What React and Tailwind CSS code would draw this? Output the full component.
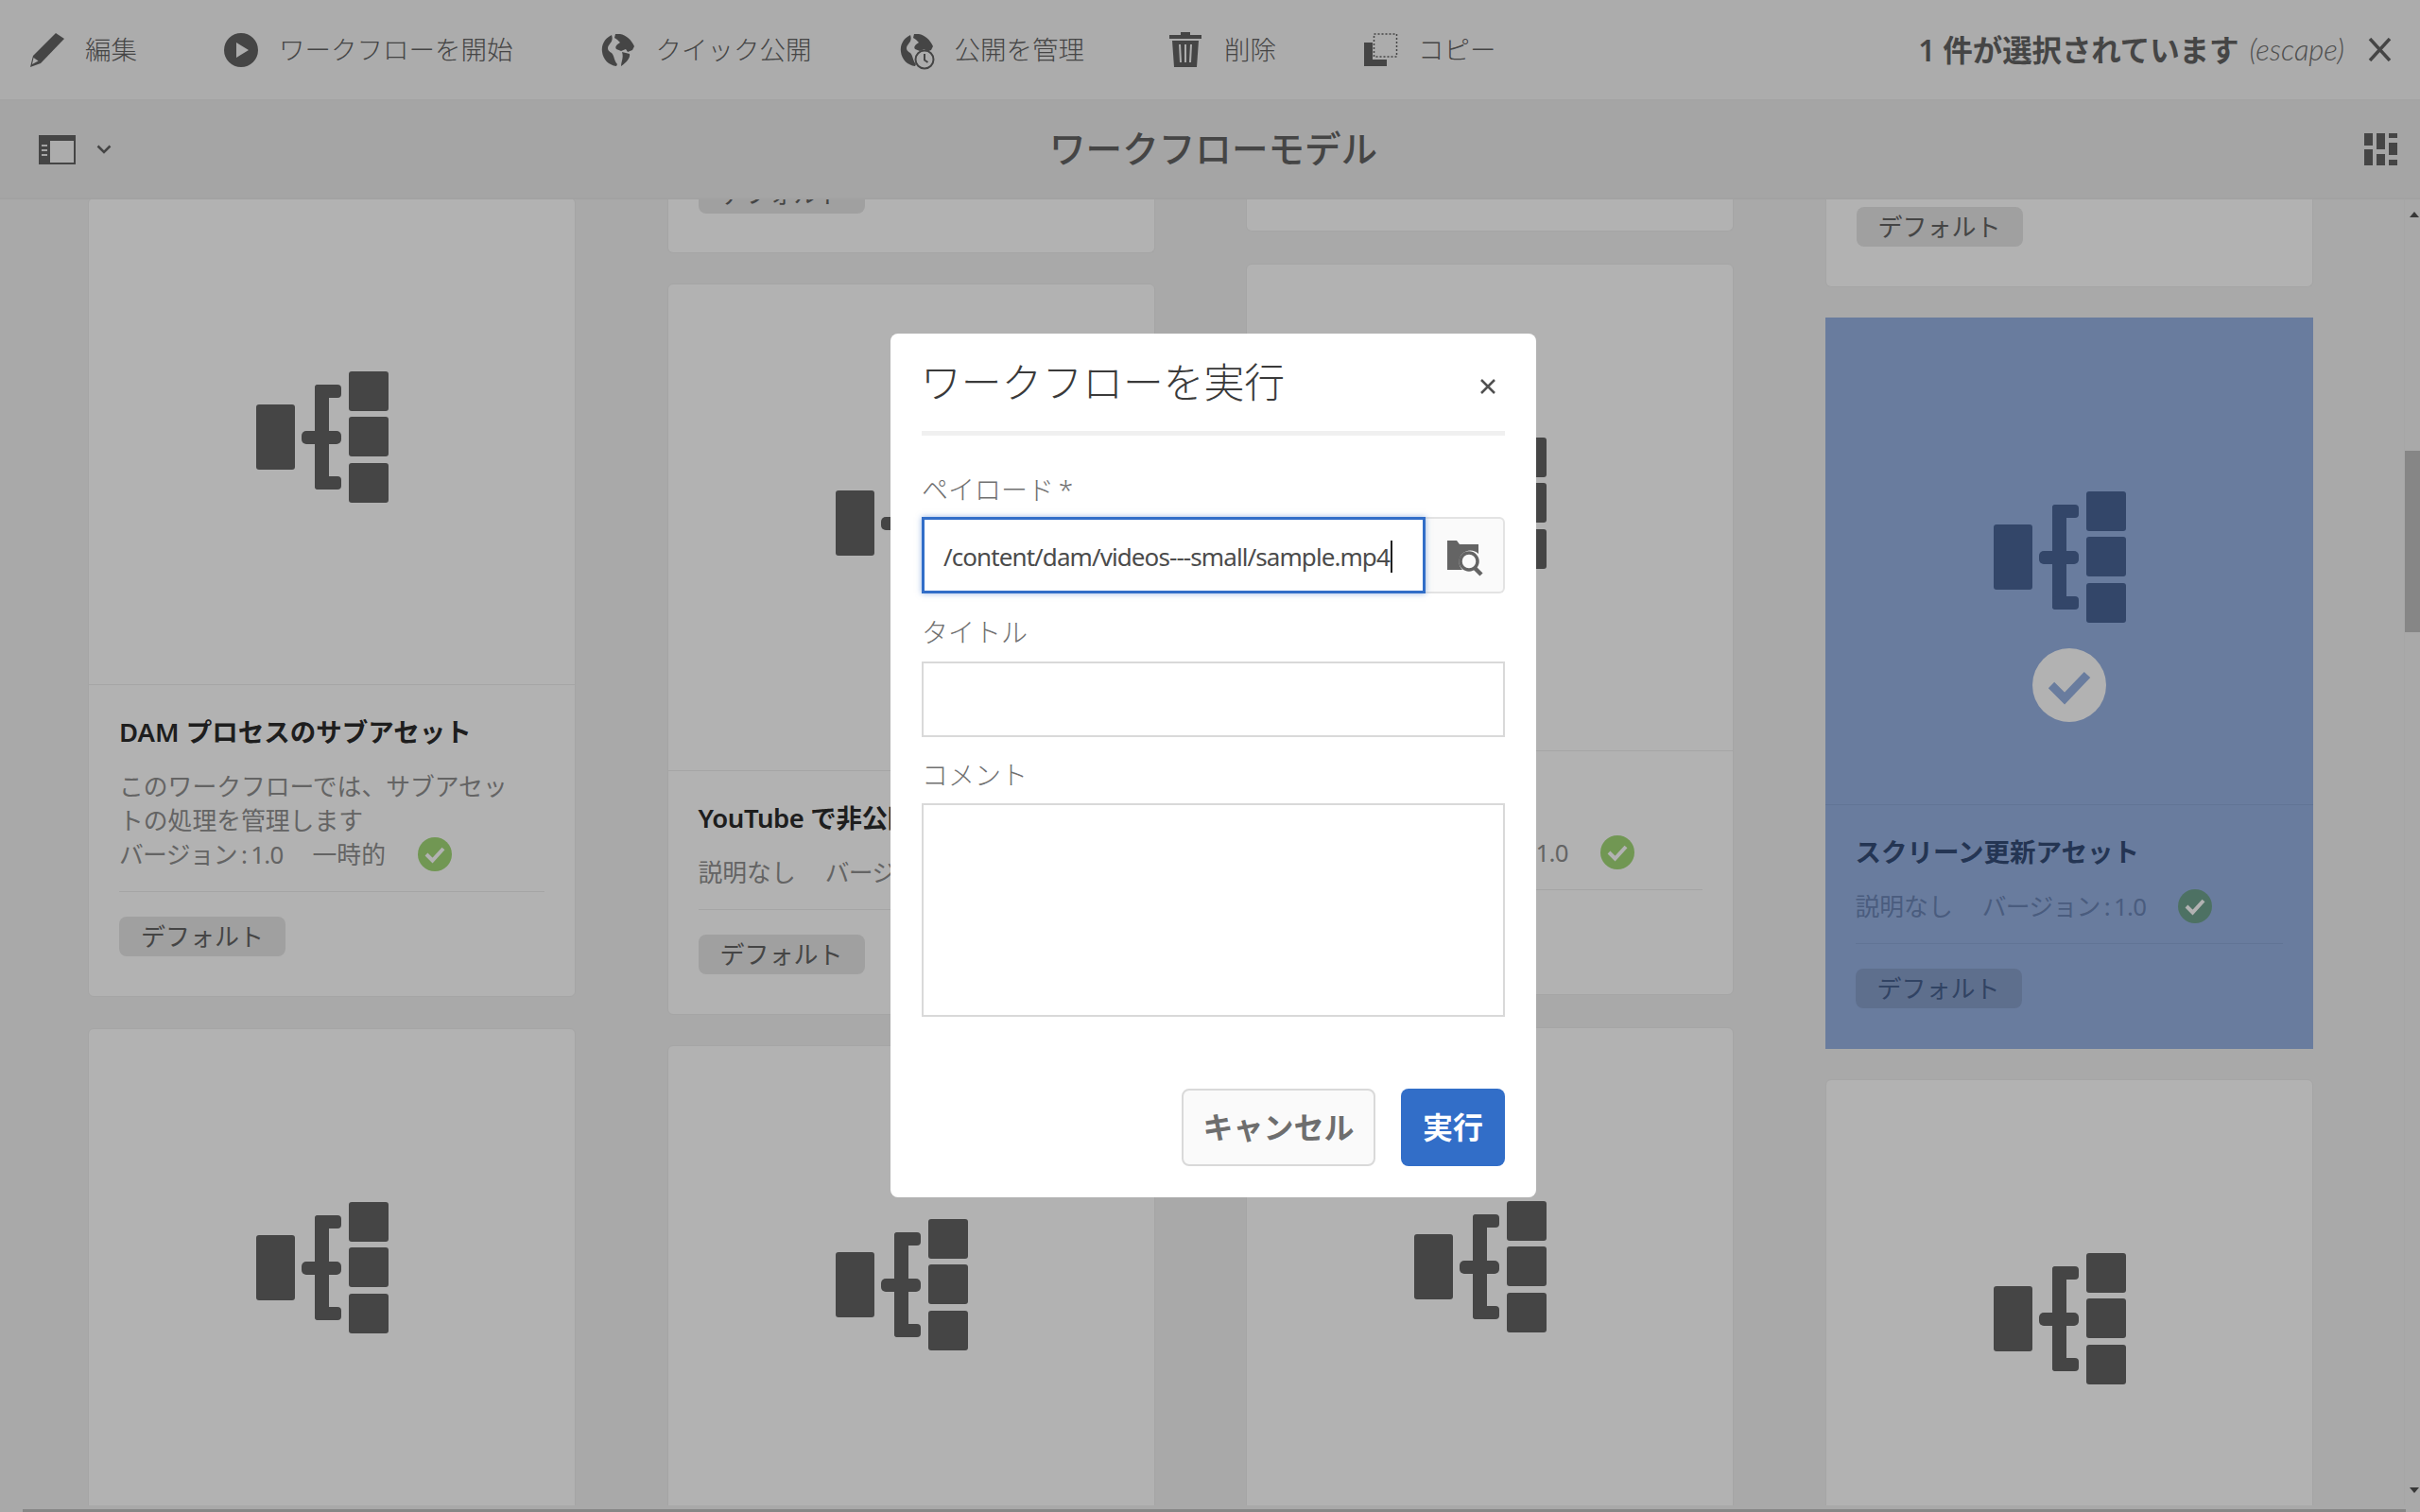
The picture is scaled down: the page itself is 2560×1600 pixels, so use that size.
const FONT = "font-['Noto_Sans','Noto_Sans_CJK_JP',sans-serif]";

const VERSION = <span className="tracking-[-0.7px] [word-spacing:-2px]">バージョン : 1.0</span>;

function WorkflowIcon({ selected }) {
    return (
        <svg width="141" height="140" viewBox="0 0 141 140" className={`mr-[21px] shrink-0 ${selected ? 'fill-[#496597]' : 'fill-[#646464]'}`}>
            <rect x="1" y="35" width="41" height="69" rx="3" />
            <rect x="99" y="0" width="42" height="42" rx="3" />
            <rect x="99" y="48" width="42" height="42" rx="3" />
            <rect x="99" y="97" width="42" height="42" rx="3" />
            <rect x="63" y="14" width="15" height="111" rx="3" />
            <rect x="63" y="14" width="28" height="14" rx="4" />
            <rect x="49" y="63" width="42" height="14" rx="5" />
            <rect x="63" y="111" width="28" height="14" rx="4" />
        </svg>
    );
}

function CheckBadge({ selected }) {
    return (
        <svg width="36" height="36" viewBox="0 0 36 36" className="shrink-0">
            <circle cx="18" cy="18" r="18" className={selected ? 'fill-[#6fa38f]' : 'fill-[#a2d878]'} />
            <path d="M9 18l6.5 6.5L27 12" fill="none" stroke="white" strokeWidth="4" />
        </svg>
    );
}

function Tag({ selected }) {
    return (
        <span className={`flex h-[42px] w-[176px] items-center justify-center rounded-[8px] bg-black/10 text-[26px] ${selected ? 'text-[#47618f]' : 'text-[#646464]'}`}>
            デフォルト
        </span>
    );
}

function WorkflowCard({ title, desc, meta, selected, imageH = 515, children, bodyH }) {
    const titleColor = selected ? 'text-[#344c78]' : 'text-[#2c2c2c]';
    const textColor = selected ? 'text-[#6a85b5]' : 'text-[#909090]';
    const line = selected ? 'border-[#8ba6d6]' : 'border-[#ececec]';
    return (
        <div className={`w-[516px] shrink-0 overflow-hidden ${selected ? 'bg-[#97b2e3]' : 'rounded-[6px] border border-[#ececec] bg-white'}`}>
            <div className={`flex flex-col items-center justify-center border-b pb-[8px] ${line}`} style={{ height: imageH }}>
                <WorkflowIcon selected={selected} />
                {children}
            </div>
            {title && (
                <div className="px-[32px]" style={{ height: bodyH }}>
                    <h3 className={`pt-[32px] text-[27.5px] leading-[36px] font-semibold whitespace-nowrap ${titleColor}`}>{title}</h3>
                    <div className={`mt-[21px] border-b pb-[21px] text-[25.8px] leading-[36px] ${textColor} ${line}`}>
                        {desc && <p>{desc}</p>}
                        <div className="flex items-center whitespace-nowrap">
                            {meta.map((m, i) => (
                                <span key={i} className={i > 0 ? 'ml-[31px]' : ''}>{m}</span>
                            ))}
                            <span className="ml-[34px]"><CheckBadge selected={selected} /></span>
                        </div>
                    </div>
                    <div className="mt-[26px]"><Tag selected={selected} /></div>
                </div>
            )}
        </div>
    );
}

function StubCard({ height, tagOffset }) {
    return (
        <div className="w-[516px] shrink-0 overflow-hidden rounded-b-[6px] border border-t-0 border-[#ececec] bg-white px-[32px]" style={{ height }}>
            {tagOffset !== undefined && <div style={{ marginTop: tagOffset }}><Tag /></div>}
        </div>
    );
}

function ToolItem({ icon, label, gap }) {
    return (
        <div className="flex items-center" style={{ gap }}>
            {icon}
            <span className="whitespace-nowrap">{label}</span>
        </div>
    );
}

function Globe() {
    return (
        <svg width="36" height="36" viewBox="0 0 36 36" className="fill-[#646464]">
            <path d="M11 2C3 6 0 13 1 20c1 8 7 14 15 15l1-2c-4-5-3-9-6-12-4-2-5-5-3-8 2-3 5-5 3-11z" />
            <path d="M15 1h5c6 1 12 6 15 13l-2 4-5 2-2-3-5 2-5-2c-2-3 1-5 4-7l-3-3-3-2z" />
            <path d="M22 20l8 2c1 4-3 9-9 13 0-5 3-9 1-15z" />
        </svg>
    );
}

function FieldLabel({ children, className }) {
    return <label className={`block text-[28px] leading-[36px] font-light text-[#707070] ${className}`}>{children}</label>;
}

export default function App() {
    return (
        <div className={`relative flex h-[1600px] w-[2560px] flex-col overflow-hidden bg-[#f2f2f2] ${FONT}`}>
            {/* action bar */}
            <div className="flex h-[107px] shrink-0 items-center border-b-2 border-[#ebebeb] bg-[#f7f7f7] pr-[30px] pl-[32px] text-[27.5px] font-light text-[#646464]">
                <ToolItem gap="22px" label="編集" icon={
                    <svg width="36" height="36" viewBox="0 0 36 36" className="fill-[#646464]">
                        <path d="M27 0l9 6-25 26-11 4 3-12z" />
                        <path d="M2 33l1.5-7 5 3.5z" className="fill-[#f7f7f7]" />
                    </svg>
                } />
                <div className="ml-[92px]">
                    <ToolItem gap="22px" label="ワークフローを開始" icon={
                        <svg width="36" height="36" viewBox="0 0 36 36">
                            <path fillRule="evenodd" d="M18 0a18 18 0 1 0 0 36 18 18 0 0 0 0-36zM13 10l13 8-13 8z" className="fill-[#646464]" />
                        </svg>
                    } />
                </div>
                <div className="ml-[93px]">
                    <ToolItem gap="22px" label="クイック公開" icon={<Globe />} />
                </div>
                <div className="ml-[93px]">
                    <ToolItem gap="22px" label="公開を管理" icon={
                        <span className="relative block h-[36px] w-[36px]">
                            <Globe />
                            <svg width="22" height="22" viewBox="0 0 22 22" className="absolute -right-[1px] -bottom-[3px]">
                                <circle cx="11" cy="11" r="9.5" fill="#f7f7f7" stroke="#646464" strokeWidth="2" />
                                <path d="M11 5v6.5l3.5 2.5" fill="none" stroke="#646464" strokeWidth="2" />
                            </svg>
                        </span>
                    } />
                </div>
                <div className="ml-[90px]">
                    <ToolItem gap="24px" label="削除" icon={
                        <svg width="34" height="37" viewBox="0 0 34 37" className="fill-[#646464]">
                            <path d="M12 0h10v3h12v4H0V3h12z" />
                            <path fillRule="evenodd" d="M3 9h28l-2 28H5zM10 13l1 19h2l-1-19zM16 13v19h2V13zM22 13l-1 19h2l1-19z" />
                        </svg>
                    } />
                </div>
                <div className="ml-[93px]">
                    <ToolItem gap="21px" label="コピー" icon={
                        <svg width="36" height="36" viewBox="0 0 36 36">
                            <path d="M0 10h9v18h15v7H0z" className="fill-[#646464]" />
                            <rect x="10.5" y="1" width="24" height="24" fill="none" stroke="#646464" strokeWidth="1.5" strokeDasharray="2 2" />
                        </svg>
                    } />
                </div>
                <div className="ml-auto flex items-center text-[#646464]">
                    <span className="text-[31.5px] font-semibold tracking-[-0.1px] whitespace-nowrap">1 件が選択されています</span>
                    <span className="ml-[11px] font-['Lato',sans-serif] text-[31px] text-[#707070] italic">(escape)</span>
                    <svg width="25" height="25" viewBox="0 0 25 25" className="ml-[25px]">
                        <path d="M2 1l21 23M23 1L2 24" stroke="#646464" strokeWidth="3.5" fill="none" />
                    </svg>
                </div>
            </div>

            {/* title bar */}
            <div className="relative flex h-[104px] shrink-0 items-center justify-between border-b-2 border-[#e8e8e8] bg-[#ededed] pr-[24px] pl-[41px]">
                <div className="flex items-center gap-[22px]">
                    <svg width="39" height="31" viewBox="0 0 39 31">
                        <rect x="1" y="1" width="37" height="29" fill="#f7f7f7" stroke="#646464" strokeWidth="2" />
                        <rect x="0" y="0" width="39" height="6" fill="#646464" />
                        <rect x="0" y="0" width="12" height="31" fill="#646464" />
                        <path d="M3 11h6M3 16h6M3 21h6" stroke="#ededed" strokeWidth="2" />
                    </svg>
                    <svg width="16" height="10" viewBox="0 0 16 10">
                        <path d="M1.5 1.5L8 8l6.5-6.5" fill="none" stroke="#646464" strokeWidth="2.5" />
                    </svg>
                </div>
                <h1 className="absolute left-[1110px] text-[38.6px] font-medium whitespace-nowrap text-[#646464]">ワークフローモデル</h1>
                <svg width="35" height="34" viewBox="0 0 35 34" className="fill-[#646464]">
                    <rect x="0" y="0" width="9" height="13" />
                    <rect x="0" y="17" width="9" height="17" />
                    <rect x="13" y="0" width="9" height="17" />
                    <rect x="13" y="22" width="9" height="12" />
                    <rect x="26" y="0" width="9" height="5" />
                    <rect x="26" y="10" width="9" height="13" />
                    <rect x="26" y="28" width="9" height="6" />
                </svg>
            </div>

            {/* masonry of workflow cards */}
            <div className="flex min-h-0 flex-1">
                <div className="flex flex-1 gap-[96.5px] overflow-hidden pl-[93px]">
                    <div className="-mt-[2px] flex flex-col gap-[33px]">
                        <WorkflowCard
                            title="DAM プロセスのサブアセット"
                            desc={<>このワークフローでは、サブアセッ<br />トの処理を管理します</>}
                            meta={[VERSION, '一時的']}
                            bodyH={329}
                        />
                        <WorkflowCard imageH={515} />
                    </div>
                    <div className="flex flex-col gap-[32px]">
                        <StubCard height={57} tagOffset={-27} />
                        <WorkflowCard
                            title={<span className="tracking-[-0.4px]">YouTube で非公開にする</span>}
                            meta={['説明なし', VERSION]}
                            bodyH={257}
                        />
                        <WorkflowCard imageH={515} />
                    </div>
                    <div className="flex flex-col gap-[34px]">
                        <StubCard height={34} />
                        <WorkflowCard
                            title="スクリーンを更新"
                            meta={['説明なし', VERSION]}
                            bodyH={257}
                        />
                        <WorkflowCard imageH={515} />
                    </div>
                    <div className="flex flex-col gap-[32px]">
                        <StubCard height={93} tagOffset={8} />
                        <WorkflowCard
                            selected
                            title="スクリーン更新アセット"
                            meta={['説明なし', VERSION]}
                            imageH={516}
                            bodyH={258}
                        >
                            <svg width="78" height="78" viewBox="0 0 78 78" className="mt-[26px] mb-[-104px] shrink-0">
                                <circle cx="39" cy="39" r="39" fill="white" />
                                <path d="M20 39l14 14 24-25" fill="none" stroke="#97b2e3" strokeWidth="9" />
                            </svg>
                        </WorkflowCard>
                        <WorkflowCard imageH={515} />
                    </div>
                </div>
                {/* vertical scrollbar */}
                <div className="relative w-[17px] shrink-0 border-l border-[#eeeeee] bg-[#f2f2f2] pt-[266px]">
                    <div className="h-[192px] bg-[#c1c1c1]" />
                    <div className="absolute top-[13px] left-[5px] h-0 w-0 border-x-[5px] border-b-[6px] border-x-transparent border-b-[#505050]" />
                    <div className="absolute bottom-[13px] left-[5px] h-0 w-0 border-x-[5px] border-t-[6px] border-x-transparent border-t-[#505050]" />
                </div>
            </div>
            {/* horizontal scrollbar */}
            <div className="flex h-[7px] shrink-0 items-end pr-[15px] pl-[24px]">
                <div className="h-[3px] w-full bg-[#c1c1c1]" />
            </div>

            {/* modal backdrop */}
            <div className="absolute inset-0 bg-black/30" />

            {/* dialog */}
            <div className="absolute top-[353px] left-[942px] flex h-[914px] w-[683px] flex-col rounded-[8px] bg-white px-[33px]">
                <div className="flex h-[108px] shrink-0 items-center justify-between border-b-[5px] border-[#f0f0f0] pt-[2px]">
                    <h2 className="-ml-[1px] text-[42.8px] leading-none font-light whitespace-nowrap text-[#3a3a3a]">ワークフローを実行</h2>
                    <svg width="18" height="18" viewBox="0 0 18 18" className="mt-[6px] mr-[9px]">
                        <path d="M2 2l14 14M16 2L2 16" stroke="#505050" strokeWidth="2.5" fill="none" />
                    </svg>
                </div>

                <FieldLabel className="mt-[39px]">ペイロード{'\u2009'}*</FieldLabel>
                <div className="mt-[11px] flex h-[81px] shrink-0">
                    <div className="relative z-10 flex w-[533px] items-center border-[3px] border-[#326ec8] bg-white pt-[3px] pl-[20px] text-[26px] text-[#4b4b4b] shadow-[0_0_6px_rgba(50,110,200,0.5)]">
                        <span className="font-['Noto_Sans',sans-serif] tracking-[-0.92px] whitespace-nowrap">/content/dam/videos---small/sample.mp4</span>
                        <span className="ml-[1px] h-[34px] w-[2px] bg-[#222222]" />
                    </div>
                    <div className="flex flex-1 items-center justify-center rounded-r-[6px] border-2 border-l-0 border-[#e3e3e3] bg-[#fafafa]">
                        <svg width="38" height="38" viewBox="0 0 38 38" className="mt-[6px] ml-[2px] fill-[#646464]">
                            <path d="M0 0h10l3 4h20v10a12 12 0 0 0-17 17H0z" />
                            <circle cx="23" cy="22" r="9" fill="none" stroke="#646464" strokeWidth="3.5" />
                            <path d="M29 29l7 7" stroke="#646464" strokeWidth="4.5" />
                        </svg>
                    </div>
                </div>

                <FieldLabel className="mt-[23px]">タイトル</FieldLabel>
                <div className="mt-[13px] h-[80px] shrink-0 border-2 border-[#d9d9d9]" />

                <FieldLabel className="mt-[22px]">コメント</FieldLabel>
                <div className="mt-[12px] h-[226px] shrink-0 border-2 border-[#d9d9d9]" />

                <div className="mt-[76px] flex justify-end gap-[27px]">
                    <button className="h-[82px] w-[205px] rounded-[8px] border-2 border-[#d9d9d9] bg-[#fafafa] text-[32px] font-semibold text-[#6e6e6e]">キャンセル</button>
                    <button className="h-[82px] w-[110px] rounded-[8px] bg-[#326ec8] text-[32px] font-bold text-white">実行</button>
                </div>
            </div>
        </div>
    );
}
